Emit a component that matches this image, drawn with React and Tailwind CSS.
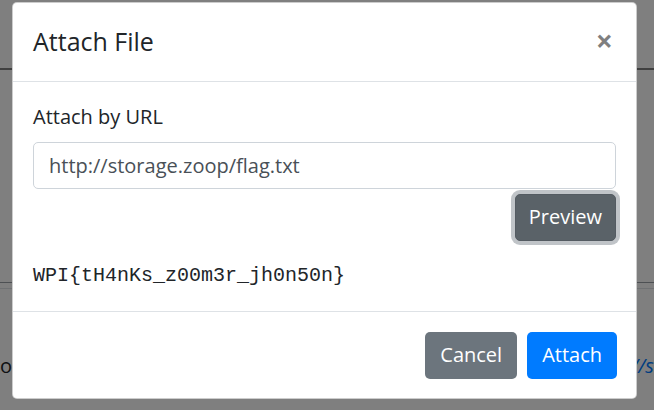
import React from 'react';

const font = { fontFamily: '"Open Sans", "Noto Sans", sans-serif' };

export default function App() {
  return (
    <div className="relative w-[654px] h-[410px] overflow-hidden bg-white" style={font}>
      {/* page behind the backdrop */}
      <div className="h-[70px] border-b-2 border-[#808080]" />
      <div className="h-[212px]" />
      <div className="border-t border-[#9aa0a6] h-[6px]" />
      <div className="border-t border-[#dee2e6]" />
      <div className="flex justify-between items-center pt-[62px] text-[20px] leading-[30px]">
        <span className="text-[#212529]">o</span>
        <span className="text-[#007bff] italic">//s</span>
      </div>

      {/* backdrop */}
      <div className="absolute inset-0 bg-black/50" />

      {/* modal */}
      <div className="absolute inset-0 flex items-start">
        <div className="ml-[12px] mt-[2px] w-[625px] bg-white border border-black/20 rounded-[5px] flex flex-col">
          <div className="flex items-start justify-between px-[20px] py-[20px] border-b border-[#dee2e6]">
            <h5 className="text-[25px] leading-[37.5px] text-[#212529] font-normal">Attach File</h5>
            <button className="text-[30px] leading-[37px] font-bold text-black/50 -mt-[1px] pr-[3px]">×</button>
          </div>

          <div className="p-[20px] flex flex-col">
            <label className="text-[20px] leading-[30px] text-[#212529] mb-[10px]">Attach by URL</label>
            <input
              type="text"
              readOnly
              value="http://storage.zoop/flag.txt"
              className="w-full h-[47px] px-[15px] text-[20px] text-[#495057] border border-[#ced4da] rounded-[5px] outline-none"
              style={font}
            />
            <div className="flex justify-end mt-[5px]">
              <button className="h-[47px] px-[13px] text-[20px] leading-[30px] text-white bg-[#5a6268] border border-[#545b62] rounded-[5px] shadow-[0_0_0_4px_rgba(130,138,145,0.5)]">
                Preview
              </button>
            </div>
            <div
              className="mt-[20px] text-[20px] leading-[30px] text-[#212529]"
              style={{ fontFamily: '"Liberation Mono", "Courier New", monospace' }}
            >
              WPI{'{'}tH4nKs_z00m3r_jh0n50n{'}'}
            </div>
          </div>

          <div className="flex justify-end gap-[10px] px-[19px] pt-[20px] pb-[19px] border-t border-[#dee2e6]">
            <button className="h-[47px] px-[15px] text-[20px] leading-[30px] text-white bg-[#6c757d] rounded-[5px]">Cancel</button>
            <button className="h-[47px] px-[15px] text-[20px] leading-[30px] text-white bg-[#007bff] rounded-[5px]">Attach</button>
          </div>
        </div>
      </div>
    </div>
  );
}
